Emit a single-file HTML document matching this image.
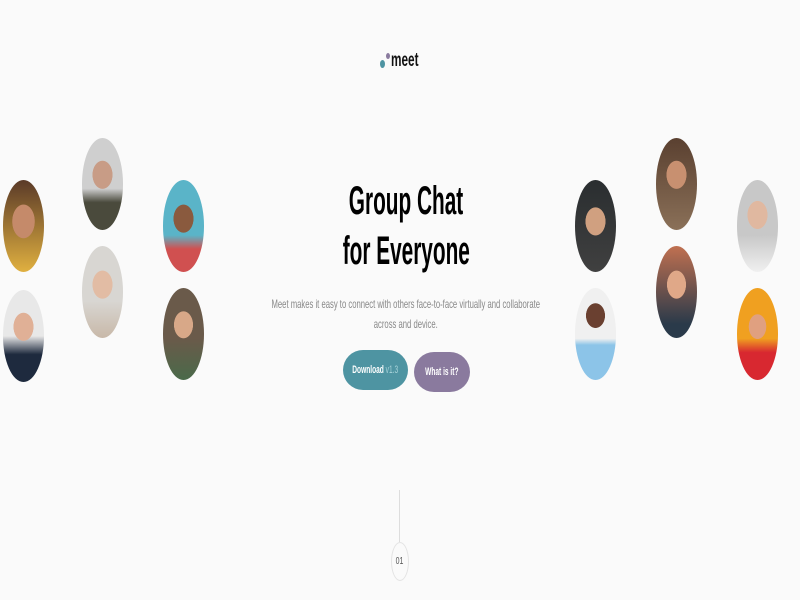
<!DOCTYPE html>
<html><head><style>
body{margin:0;width:800px;height:600px;background:#fafafa;overflow:hidden;position:relative;font-family:"Liberation Sans",sans-serif}
.a{position:absolute;width:41px;height:92px;border-radius:50%;overflow:hidden}
.c{position:absolute;left:6px;width:800px;text-align:center}
.s{display:inline-block;transform:scaleX(.62);transform-origin:center;white-space:nowrap}
.btn{position:absolute;border-radius:20px/20px;color:#fff;font-weight:bold;font-size:11px;display:flex;align-items:center;justify-content:center;white-space:nowrap}
</style></head><body>
<div style="position:absolute;left:380px;top:60px;width:5px;height:8px;border-radius:50%;background:#4e94a2"></div>
<div style="position:absolute;left:386px;top:53px;width:4px;height:6px;border-radius:50%;background:#8a7a9e"></div>
<div style="position:absolute;left:391px;top:50px;width:50px;font-size:19px;font-weight:bold;color:#111"><span class="s" style="transform-origin:left;transform:scaleX(.62)">meet</span></div>

<div class="c" style="top:176px;font-size:40px;font-weight:bold;color:#000;line-height:50px"><span class="s" style="transform:scaleX(.52)">Group Chat</span><br><span class="s" style="transform:scaleX(.52)">for Everyone</span></div>
<div class="c" style="top:294px;font-size:12px;color:#888;line-height:20px"><span class="s" style="transform:scaleX(.64)">Meet makes it easy to connect with others face-to-face virtually and collaborate<br>across and device.</span></div>

<div class="btn" style="left:343px;top:350px;width:65px;height:40px;background:#4e94a2"><span class="s" style="transform:scaleX(.6)">Download <span style="color:#a9d4da;font-weight:normal">v1.3</span></span></div>
<div class="btn" style="left:414px;top:352px;width:56px;height:40px;background:#8a7a9e"><span class="s" style="transform:scaleX(.6)">What is it?</span></div>

<div style="position:absolute;left:399px;top:490px;width:1px;height:52px;background:#ddd"></div>
<div style="position:absolute;left:391px;top:542px;width:16px;height:37px;border:1px solid #e3e3e3;border-radius:50%;font-size:10px;color:#555;display:flex;align-items:center;justify-content:center"><span class="s" style="transform:scaleX(.7)">01</span></div>

<div class="a" style="left:3px;top:180px;background:radial-gradient(ellipse 45% 30% at 50% 45%,#c58a6a 60%,transparent 62%),linear-gradient(#5a3a28,#e0b040)"></div>
<div class="a" style="left:3px;top:290px;background:radial-gradient(ellipse 40% 25% at 50% 40%,#e0b096 60%,transparent 62%),linear-gradient(#e8e8e8 50%,#1e2a3e 70%)"></div>
<div class="a" style="left:82px;top:138px;background:radial-gradient(ellipse 40% 25% at 50% 40%,#c89c86 60%,transparent 62%),linear-gradient(#cfcfcf 55%,#4a4a3c 70%)"></div>
<div class="a" style="left:82px;top:246px;background:radial-gradient(ellipse 40% 25% at 50% 42%,#e2bca4 60%,transparent 62%),linear-gradient(#d8d6d2 60%,#c8b8a8)"></div>
<div class="a" style="left:163px;top:180px;background:radial-gradient(ellipse 40% 25% at 50% 42%,#8a5a3e 60%,transparent 62%),linear-gradient(#5ab4c8 60%,#d05050 75%)"></div>
<div class="a" style="left:163px;top:288px;background:radial-gradient(ellipse 38% 24% at 50% 40%,#d8a888 60%,transparent 62%),linear-gradient(#6a5a4a 55%,#4a6a4a)"></div>

<div class="a" style="left:575px;top:180px;background:radial-gradient(ellipse 40% 25% at 50% 45%,#d0a080 60%,transparent 62%),linear-gradient(#2a2e30,#404040)"></div>
<div class="a" style="left:575px;top:288px;background:radial-gradient(ellipse 38% 22% at 50% 30%,#6a4030 60%,transparent 62%),linear-gradient(#f0f0f0 55%,#8cc4e8 62%)"></div>
<div class="a" style="left:656px;top:138px;background:radial-gradient(ellipse 40% 25% at 50% 40%,#c89070 60%,transparent 62%),linear-gradient(#5a4030,#8a7058)"></div>
<div class="a" style="left:656px;top:246px;background:radial-gradient(ellipse 38% 25% at 50% 42%,#e0a888 60%,transparent 62%),linear-gradient(#c07050,#2a3a4a 85%)"></div>
<div class="a" style="left:737px;top:180px;background:radial-gradient(ellipse 40% 25% at 50% 38%,#e0b8a0 60%,transparent 62%),linear-gradient(#c8c8c8 60%,#f0f0f0)"></div>
<div class="a" style="left:737px;top:288px;background:radial-gradient(ellipse 35% 22% at 50% 42%,#e0a080 60%,transparent 62%),linear-gradient(#f0a020 55%,#d82830 70%)"></div>
</body></html>
